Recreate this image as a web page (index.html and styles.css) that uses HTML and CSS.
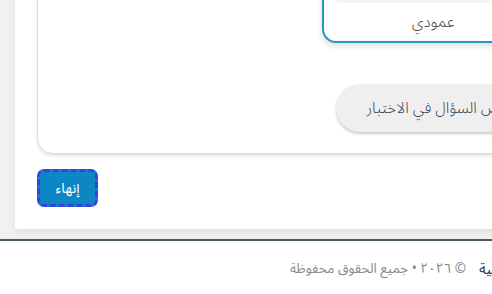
FILE: index.html
```html
<!DOCTYPE html>
<html lang="ar">
<head>
<meta charset="utf-8">
<title>الاختبار</title>
<link rel="stylesheet" href="styles.css">
</head>
<body>
<div class="page">
  <main class="main" dir="rtl">
    <section class="card">
      <div class="option selected">
        <div class="option-preview"></div>
        <div class="option-label">عمودي</div>
      </div>
      <div class="pill-row">
        <button class="pill" type="button">عرض السؤال في الاختبار</button>
      </div>
    </section>
    <div class="actions">
      <button class="finish" type="button">إنهاء</button>
    </div>
  </main>
  <footer class="footer">
    <span class="copy" dir="rtl">© ٢٠٢٦ • جميع الحقوق محفوظة</span>
    <span class="lang" dir="rtl">العربية</span>
  </footer>
</div>
</body>
</html>
```
FILE: styles.css
```css
html, body {
  margin: 0;
  padding: 0;
  overflow: hidden;
}
body {
  background: #f1f1f1;
  font-family: "Noto Sans Arabic", "Noto Sans", "DejaVu Sans", sans-serif;
  color: #333;
}
.page {
  width: 620px;
  margin-top: -113px;
}
.main {
  margin-left: 15px;
  background: #fff;
  padding: 22px 22px 22px 22px;
  box-shadow: 0 3px 8px rgba(0, 0, 0, 0.08);
}
.card {
  border: 1px solid #dcdcdc;
  border-radius: 16px;
  box-shadow: 0 2px 3px rgba(0, 0, 0, 0.12);
  padding: 21px 53px 21px 20px;
  display: flex;
  flex-direction: column;
  align-items: flex-start;
}
.option {
  width: 222px;
  box-sizing: border-box;
  border: 2px solid #2a97c3;
  border-radius: 14px;
  padding: 10px 11px 0 11px;
  box-shadow: 0 3px 6px rgba(0, 0, 0, 0.14);
  background: #fff;
}
.option-preview {
  height: 60px;
  background: #f4f4f4;
  border-radius: 6px;
}
.option-label {
  height: 38px;
  line-height: 38px;
  text-align: center;
  font-size: 15.5px;
  font-weight: 300;
  color: #3a3a3a;
}
.pill-row {
  margin-top: 41px;
}
.pill {
  height: 48px;
  border: none;
  border-radius: 24px;
  background: #efefef;
  box-shadow: 0 2px 3px rgba(0, 0, 0, 0.2);
  padding: 0 30px;
  font-family: inherit;
  font-size: 15.5px;
  font-weight: 300;
  color: #3b4250;
}
.actions {
  display: flex;
  justify-content: flex-end;
  margin-top: 15px;
}
.finish {
  width: 61px;
  height: 38px;
  box-sizing: border-box;
  background: #0d87c3;
  color: #fff;
  border: 3px dashed #3d3fe0;
  border-radius: 7px;
  font-family: inherit;
  font-size: 14px;
  padding: 0;
}
.footer {
  margin-top: 10px;
  border-top: 2px solid #4b5961;
  background: #fff;
  height: 80px;
  display: flex;
  align-items: flex-start;
  gap: 13px;
  padding-left: 290px;
  padding-top: 18px;
}
.copy {
  font-size: 13.5px;
  color: #8a8a8a;
  line-height: 20px;
}
.lang {
  font-size: 15px;
  color: #2b3d52;
  line-height: 20px;
}
```
